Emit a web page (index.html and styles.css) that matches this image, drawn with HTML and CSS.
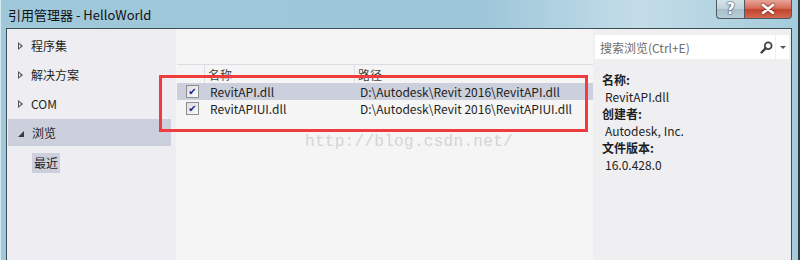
FILE: index.html
```html
<!DOCTYPE html>
<html lang="zh-CN">
<head>
  <meta charset="UTF-8">
  <title>引用管理器 - HelloWorld</title>
  <link rel="stylesheet" href="styles.css">
</head>
<body>
  <div class="window">
    <div class="titlebar">
      <span class="title">引用管理器 - HelloWorld</span>
      <div class="caption-buttons">
        <div class="cap-btn help">?</div>
        <div class="cap-btn close">
          <svg width="14" height="10" viewBox="0 0 14 10">
            <path d="M2 1 L12 9 M12 1 L2 9" stroke="#fff" stroke-width="2.6" stroke-linecap="round"/>
          </svg>
        </div>
      </div>
    </div>

    <div class="client">
      <!-- left tree -->
      <div class="nav">
        <div class="nav-item"><span class="arrow"></span>程序集</div>
        <div class="nav-item"><span class="arrow"></span>解决方案</div>
        <div class="nav-item"><span class="arrow"></span>COM</div>
        <div class="nav-item selected"><span class="arrow open"></span>浏览</div>
        <div class="nav-sub"><span>最近</span></div>
      </div>

      <!-- reference list -->
      <div class="list-pane">
        <div class="list">
          <div class="list-head">
            <div class="col-check"></div>
            <div class="col-name">名称</div>
            <div class="col-path">路径</div>
          </div>
          <div class="list-row selected">
            <div class="col-check"><span class="checkbox">✔</span></div>
            <div class="col-name">RevitAPI.dll</div>
            <div class="col-path">D:\Autodesk\Revit 2016\RevitAPI.dll</div>
          </div>
          <div class="list-row">
            <div class="col-check"><span class="checkbox">✔</span></div>
            <div class="col-name">RevitAPIUI.dll</div>
            <div class="col-path">D:\Autodesk\Revit 2016\RevitAPIUI.dll</div>
          </div>
        </div>
        <div class="highlight"></div>
        <div class="watermark">http://blog.csdn.net/</div>
      </div>

      <!-- details -->
      <div class="details">
        <div class="search">
          <span class="search-text">搜索浏览(Ctrl+E)</span>
          <svg class="search-icon" width="13" height="13" viewBox="0 0 13 13">
            <circle cx="8.2" cy="4.8" r="3.4" fill="none" stroke="#444" stroke-width="1.8"/>
            <path d="M5.8 7.2 L1.6 11.4" stroke="#444" stroke-width="2.4" stroke-linecap="round"/>
          </svg>
          <span class="search-drop"></span>
        </div>
        <div class="info">
          <div class="info-label">名称:</div>
          <div class="info-value">RevitAPI.dll</div>
          <div class="info-label">创建者:</div>
          <div class="info-value">Autodesk, Inc.</div>
          <div class="info-label">文件版本:</div>
          <div class="info-value">16.0.428.0</div>
        </div>
      </div>
    </div>
  </div>
</body>
</html>
```

FILE: styles.css
```css
* {
  box-sizing: border-box;
}

body {
  margin: 0;
  width: 800px;
  height: 260px;
  overflow: hidden;
  font-family: "Segoe UI", "Noto Sans CJK SC", sans-serif;
  font-size: 12px;
  color: #1e1e1e;
}

.window {
  height: 260px;
  background: linear-gradient(90deg, #9fc8da 0%, #9dc6d9 60%, #c3dde8 80%, #a4cbdc 100%);
  border-left: 1px solid #d6e8f0;
  border-right: 2px solid #2f3d44;
  padding: 0 6px 0 5px;
  display: flex;
  flex-direction: column;
}

.titlebar {
  height: 28px;
  display: flex;
  justify-content: space-between;
  align-items: flex-start;
  flex-shrink: 0;
}

.title {
  font-family: "Noto Sans CJK SC", sans-serif;
  font-size: 13px;
  line-height: 30px;
  margin-left: 2px;
  color: #101010;
}

.caption-buttons {
  display: flex;
}

.cap-btn {
  height: 19px;
  border: 1px solid #4d5a63;
  border-top: none;
  display: flex;
  align-items: center;
  justify-content: center;
}

.cap-btn.help {
  width: 28px;
  border-right: none;
  border-bottom-left-radius: 4px;
  background: linear-gradient(#d6e3ea 0%, #bfd2dc 50%, #a9c1cd 51%, #b7ccd6 100%);
  color: #fff;
  font-family: "DejaVu Sans", sans-serif;
  font-weight: bold;
  font-size: 15px;
  text-shadow: 0 0 2px #2c3a44, 0 0 1px #2c3a44;
}

.cap-btn.close {
  width: 48px;
  border-bottom-right-radius: 4px;
  background: linear-gradient(#e7a497 0%, #d66d5c 45%, #c3432d 55%, #d26a52 100%);
}

.cap-btn.close svg {
  filter: drop-shadow(0 0 1px #5c1e14);
}

.client {
  flex: 1;
  display: flex;
  border: 1px solid #3e4e57;
  border-bottom: none;
  background: #eeeef2;
}

/* left tree */
.nav {
  width: 169px;
  padding-top: 2px;
  background: #eeeef2;
  flex-shrink: 0;
}

.nav-item {
  height: 29px;
  display: flex;
  align-items: center;
  padding-left: 11px;
  font-family: "Noto Sans CJK SC", sans-serif;
  font-size: 12px;
}

.nav-item.selected {
  margin: 1px 5px 1px 1px;
  height: 27px;
  padding-left: 10px;
  background: #cccfdc;
}

.arrow {
  width: 0;
  height: 0;
  border-left: 5px solid #555;
  border-top: 4px solid transparent;
  border-bottom: 4px solid transparent;
  margin-right: 8px;
  position: relative;
}

.arrow::after {
  content: "";
  position: absolute;
  left: -4px;
  top: -2px;
  border-left: 2px solid #eeeef2;
  border-top: 2px solid transparent;
  border-bottom: 2px solid transparent;
}

.arrow.open {
  border: none;
  border-right: 6px solid #3a3a3a;
  border-top: 6px solid transparent;
  margin-right: 8px;
  margin-top: 2px;
}

.arrow.open::after {
  display: none;
}

.nav-sub {
  padding: 6px 0 0 25px;
  font-family: "Noto Sans CJK SC", sans-serif;
}

.nav-sub span {
  display: inline-block;
  background: #cccfdc;
  padding: 1px 2px;
  line-height: 18px;
}

/* list */
.list-pane {
  width: 417px;
  background: #f5f5f5;
  padding: 35px 0 0 1px;
  position: relative;
  flex-shrink: 0;
}

.list-head,
.list-row {
  display: flex;
  align-items: center;
}

.list-head {
  height: 19px;
  border-top: 1px solid #dcdce4;
  font-family: "Noto Sans CJK SC", sans-serif;
  color: #444;
  align-items: flex-start;
}

.list-head .col-name,
.list-head .col-path {
  border-left: 1px solid #dcdce4;
  height: 18px;
  line-height: 20px;
  padding-left: 3px;
}

.list-row {
  height: 17px;
}

.list-row.selected {
  background: #cccfdc;
}

.col-check {
  width: 27px;
  display: flex;
  justify-content: center;
}

.col-name {
  width: 150px;
  padding-left: 6px;
}

.list-head .col-name {
  padding-left: 3px;
}

.col-path {
  flex: 1;
  padding-left: 5px;
}

.list-row .col-path {
  padding-left: 6px;
}

.checkbox {
  width: 13px;
  height: 13px;
  border: 1px solid #8f8f8f;
  background: linear-gradient(135deg, #dcdcdc, #fbfbfb);
  color: #21218a;
  font-size: 10px;
  line-height: 11px;
  text-align: center;
  font-family: "DejaVu Sans", sans-serif;
  margin-left: 4px;
}

.highlight {
  position: absolute;
  left: -17px;
  top: 46px;
  width: 429px;
  height: 57px;
  border: 3px solid #f03c3c;
}

.watermark {
  position: absolute;
  left: 129px;
  top: 104px;
  font-family: "Liberation Mono", monospace;
  font-size: 16px;
  color: #d4d4d4;
  letter-spacing: 0.3px;
}

/* details */
.details {
  flex: 1;
  background: #efeff2;
  padding: 6px 2px 0 2px;
}

.search {
  height: 24px;
  background: #fff;
  display: flex;
  align-items: center;
  padding-left: 5px;
}

.search-text {
  flex: 1;
  color: #6d6d6d;
  font-family: "Noto Sans CJK SC", sans-serif;
}

.search-icon {
  margin-right: 2px;
}

.search-drop {
  width: 14px;
  height: 24px;
  border-left: 1px solid #f0f0f0;
  display: flex;
  align-items: center;
  justify-content: center;
}

.search-drop::after {
  content: "";
  border-top: 3px solid #555;
  border-left: 3px solid transparent;
  border-right: 3px solid transparent;
}

.info {
  padding: 12px 0 0 7px;
  line-height: 17px;
}

.info-label {
  font-family: "Noto Sans CJK SC", sans-serif;
  font-weight: bold;
}

.info-value {
  padding-left: 3px;
}
```
